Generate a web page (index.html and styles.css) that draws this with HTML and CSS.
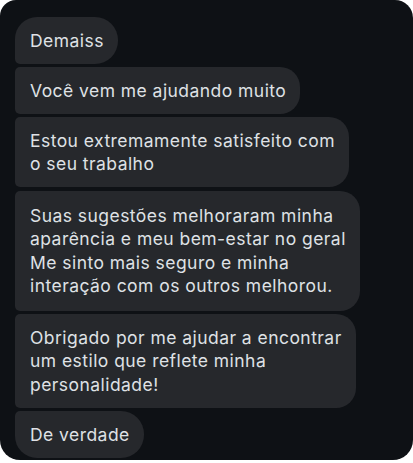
FILE: index.html
```html
<!DOCTYPE html>
<html lang="pt-BR">
<head>
  <meta charset="UTF-8">
  <meta name="viewport" content="width=device-width, initial-scale=1.0">
  <title>Mensagens</title>
  <link rel="stylesheet" href="styles.css">
</head>
<body>
  <div class="chat">
    <!-- Incoming message group -->
    <div class="group">
      <div class="bubble">Demaiss</div>
      <div class="bubble">Você vem me ajudando muito</div>
      <div class="bubble">Estou extremamente satisfeito com<br>o seu trabalho</div>
      <div class="bubble tall">Suas sugestões melhoraram minha<br>aparência e meu bem-estar no geral<br>Me sinto mais seguro e minha<br>interação com os outros melhorou.</div>
      <div class="bubble">Obrigado por me ajudar a encontrar<br>um estilo que reflete minha<br>personalidade!</div>
      <div class="bubble">De verdade</div>
    </div>
  </div>
</body>
</html>
```

FILE: styles.css
```css
body {
  margin: 0;
  background-color: #fff;
  font-family: Inter, "Noto Sans", sans-serif;
}
.chat {
  width: 413px;
  height: 460px;
  box-sizing: border-box;
  padding: 17px 15px 0;
  background-color: #0e1115;
  border-radius: 16px 18px 20px 20px;
  overflow: hidden;
}
.group {
  display: flex;
  flex-direction: column;
  align-items: flex-start;
  gap: 3.5px;
}
.bubble {
  padding: 11.5px 14px 11.5px 15px;
  background-color: #26282c;
  color: #dfe1e5;
  font-size: 17.5px;
  line-height: 23.5px;
  letter-spacing: 0.45px;
  border-radius: 5px 20px 20px 5px;
}
.bubble:first-child {
  border-radius: 22px 23px 23px 5px;
}
.bubble:last-child {
  border-radius: 5px 23px 23px 22px;
}
.tall {
  padding-top: 13px;
  padding-bottom: 13px;
}
```
